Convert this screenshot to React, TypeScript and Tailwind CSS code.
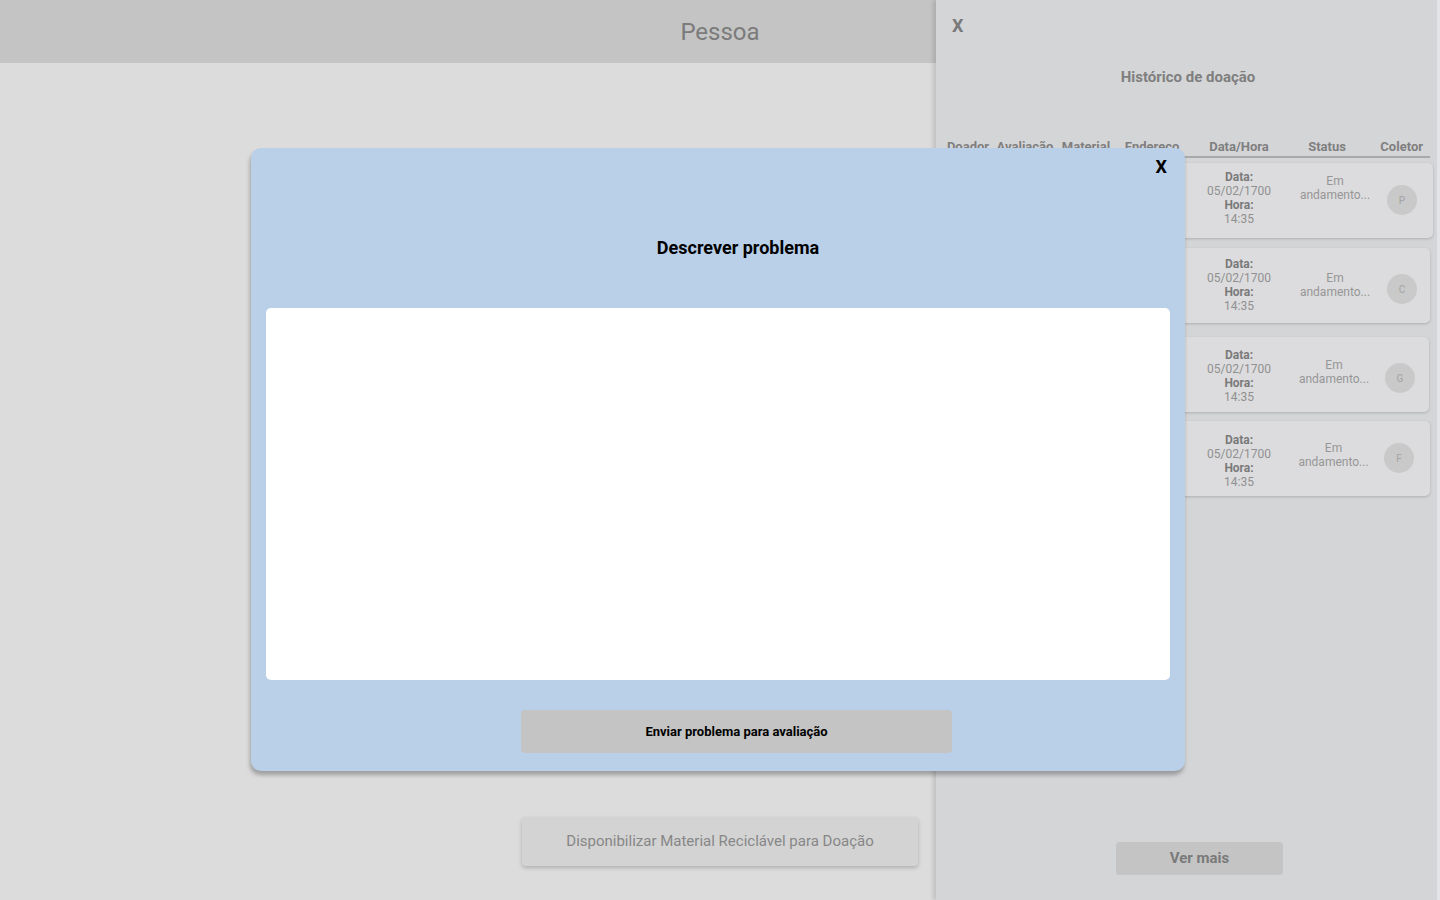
const rows = [
  { letter: "P", gap: "mt-[5px]", w: "w-[487px]", dataPt: "pt-[7px]", statusPt: "pt-[11px]", avatarPt: "pt-[22px]", avatarMr: "mr-[16px]" },
  { letter: "C", gap: "mt-[10px]", w: "w-[484px]", dataPt: "pt-[9px]", statusPt: "pt-[23px]", avatarPt: "pt-[26px]", avatarMr: "mr-[13px]" },
  { letter: "G", gap: "mt-[14px]", w: "w-[483px]", dataPt: "pt-[11px]", statusPt: "pt-[21px]", avatarPt: "pt-[26px]", avatarMr: "mr-[14px]" },
  { letter: "F", gap: "mt-[9px]", w: "w-[484px]", dataPt: "pt-[12px]", statusPt: "pt-[20px]", avatarPt: "pt-[22px]", avatarMr: "mr-[16px]" },
];

const columns: { label: string; w: string }[] = [
  { label: "Doador", w: "w-[44px] text-center" },
  { label: "Avaliação", w: "w-[70px] text-center" },
  { label: "Material", w: "w-[52px] text-center" },
  { label: "Endereço", w: "w-[80px] text-center" },
  { label: "Data/Hora", w: "w-[94px] text-center" },
  { label: "Status", w: "w-[82px] text-center" },
  { label: "Coletor", w: "w-[62px] text-right pr-[7px]" },
];

function HistoryPanel() {
  return (
    <aside className="absolute right-0 top-0 flex h-full w-[504px] flex-col bg-[#d4d5d7] shadow-[-3px_0_4px_rgba(0,0,0,0.12)]">
      <div className="absolute right-0 top-0 h-full w-[3px] bg-[#e4e4e8]" />
      <button className="ml-[16px] mt-[15px] w-fit text-[18px] font-bold leading-[21px] text-[#7a7a7a]">
        X
      </button>
      <h2 className="mt-[32px] text-center text-[15px] font-bold leading-[18px] text-[#7f7f7f]">
        Histórico de doação
      </h2>

      <div className="ml-[10px] mt-[53px] flex w-[484px] border-b-2 border-[#a9a9a9] pb-[2px]">
        {columns.map((c) => (
          <div
            key={c.label}
            className={`${c.w} shrink-0 whitespace-nowrap text-[13px] font-bold leading-[15px] text-[#7f7f7f]`}
          >
            {c.label}
          </div>
        ))}
      </div>

      {rows.map((r) => (
        <div
          key={r.letter}
          className={`${r.gap} ${r.w} ml-[10px] flex h-[75px] shrink-0 items-start rounded-[5px] bg-[#dcdcde] shadow-[0_1px_3px_rgba(0,0,0,0.18)]`}
        >
          <div className="w-[246px] shrink-0" />
          <div className={`${r.dataPt} w-[94px] shrink-0 text-center text-[12px] leading-[14px]`}>
            <div className="font-bold text-[#7a7a7a]">Data:</div>
            <div className="text-[#909090]">05/02/1700</div>
            <div className="font-bold text-[#7a7a7a]">Hora:</div>
            <div className="text-[#909090]">14:35</div>
          </div>
          <div className={`${r.statusPt} flex-1 pr-[3px] text-center text-[12px] leading-[14px] text-[#969696]`}>
            <div>Em</div>
            <div>andamento...</div>
          </div>
          <div className={`${r.avatarPt} ${r.avatarMr} shrink-0`}>
            <div className="flex h-[30px] w-[30px] items-center justify-center rounded-full bg-[#c9c9c9] text-[10px] text-[#a3a3a3]">
              {r.letter}
            </div>
          </div>
        </div>
      ))}

      <button className="mb-[25px] ml-[180px] mt-auto h-[33px] w-[167px] rounded-[4px] bg-[#c4c4c4] text-[15px] font-bold text-[#7a7a7a]">
        Ver mais
      </button>
    </aside>
  );
}

function ProblemModal() {
  return (
    <div className="absolute left-[251px] top-[148px] flex h-[623px] w-[934px] flex-col rounded-[10px] bg-[#bacfe8] shadow-[-1px_4px_4px_rgba(0,0,0,0.28)]">
      <div className="flex justify-end pr-[18px] pt-[8px]">
        <button className="text-[18px] font-bold leading-[21px] text-black">X</button>
      </div>
      <h3 className="mt-[60px] pl-[40px] text-center text-[18px] font-bold leading-[21px] text-black">
        Descrever problema
      </h3>
      <textarea className="mx-[15px] mt-[50px] h-[372px] resize-none rounded-[5px] bg-white p-3 text-[14px] outline-none" />
      <button className="ml-[270px] mt-[30px] h-[43px] w-[431px] rounded-[4px] bg-[#c4c4c4] text-[13px] font-bold text-black">
        Enviar problema para avaliação
      </button>
    </div>
  );
}

export default function App() {
  return (
    <div className="relative h-[900px] w-[1440px] overflow-hidden bg-[#dcdcdc] font-['Roboto',_'Liberation_Sans',_sans-serif]">
      <header className="flex h-[63px] items-center justify-center bg-[#c4c4c4]">
        <h1 className="text-[24px] text-[#7b7b7b]">Pessoa</h1>
      </header>
      <main className="flex justify-center pt-[754px]">
        <button className="h-[49px] w-[396px] rounded-[4px] bg-[#d3d3d3] text-[15px] text-[#878787] shadow-[0_2px_4px_rgba(0,0,0,0.2)]">
          Disponibilizar Material Reciclável para Doação
        </button>
      </main>
      <HistoryPanel />
      <ProblemModal />
    </div>
  );
}
